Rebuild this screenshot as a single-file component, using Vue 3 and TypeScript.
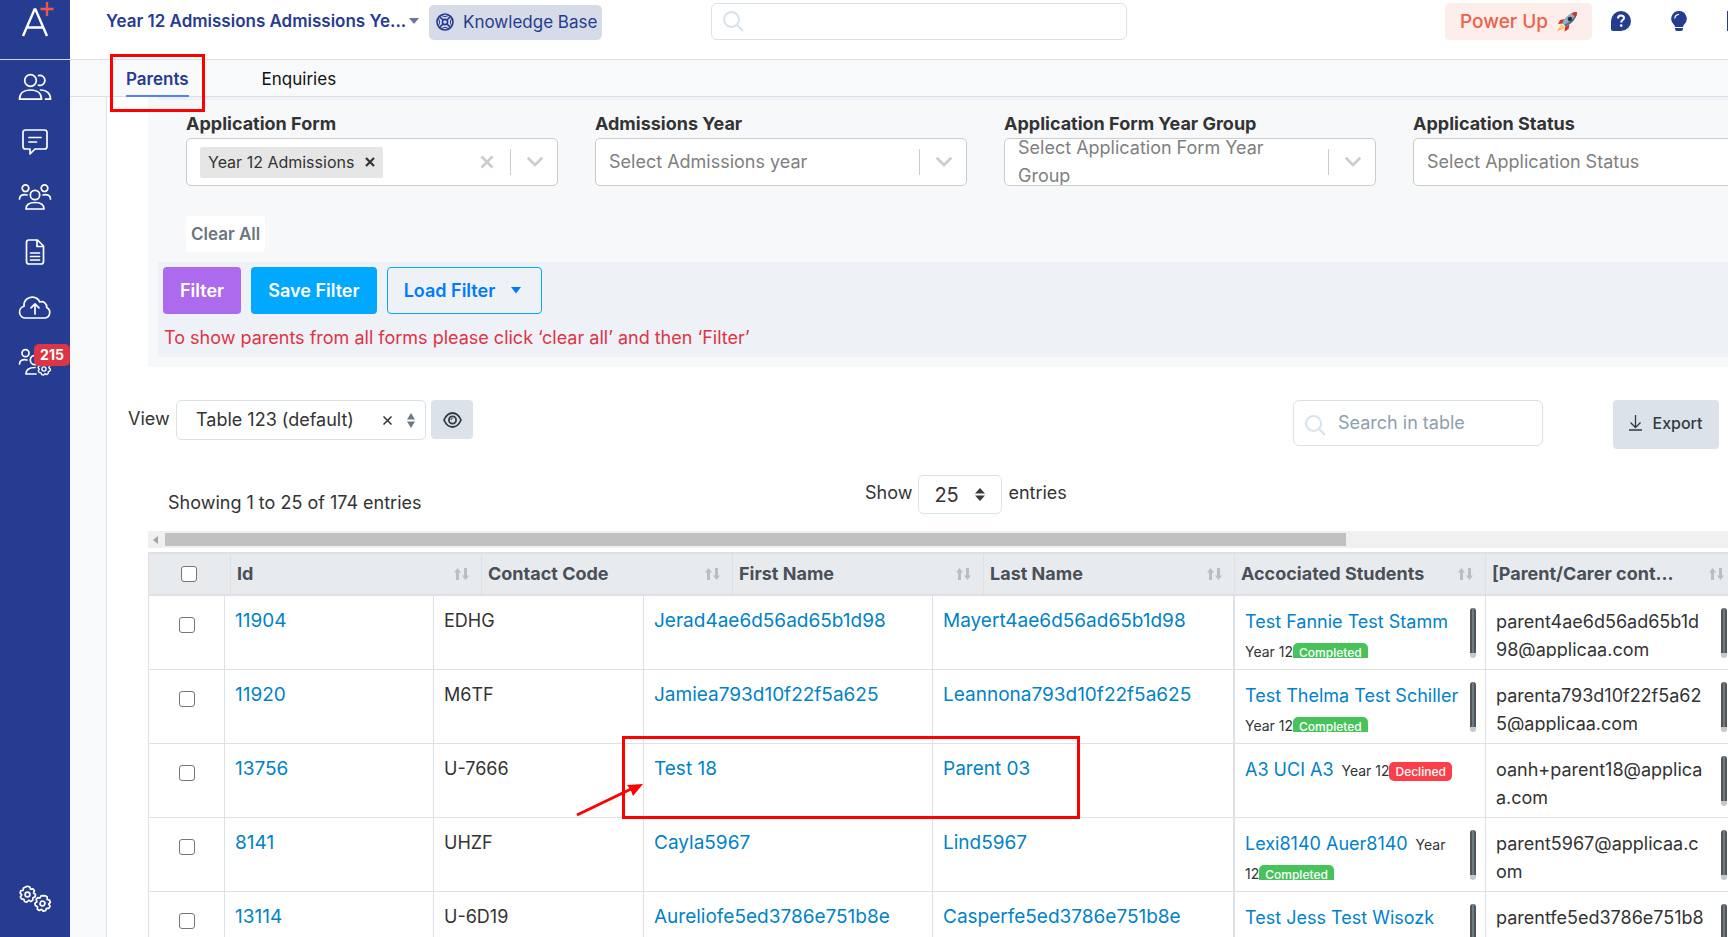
<script setup lang="ts">
import { ref } from 'vue'

interface Row {
  id: string
  code: string
  first: string
  last: string
  student: string
  year: string
  status: 'Completed' | 'Declined'
  scroll: boolean
  email: string
}

const filters = [
  { id: 'adm-year', label: 'Admissions Year', placeholder: 'Select Admissions year', wrap: false },
  { id: 'form-group', label: 'Application Form Year Group', placeholder: 'Select Application Form Year Group', wrap: true },
  { id: 'app-status', label: 'Application Status', placeholder: 'Select Application Status', wrap: false },
]

const headings = ['Id', 'Contact Code', 'First Name', 'Last Name', 'Accociated Students', '[Parent/Carer cont...']

const rows: Row[] = [
  { id: '11904', code: 'EDHG', first: 'Jerad4ae6d56ad65b1d98', last: 'Mayert4ae6d56ad65b1d98', student: 'Test Fannie Test Stamm', year: '\nYear 12', status: 'Completed', scroll: true, email: 'parent4ae6d56ad65b1d\n98@applicaa.com' },
  { id: '11920', code: 'M6TF', first: 'Jamiea793d10f22f5a625', last: 'Leannona793d10f22f5a625', student: 'Test Thelma Test Schiller', year: '\nYear 12', status: 'Completed', scroll: true, email: 'parenta793d10f22f5a62\n5@applicaa.com' },
  { id: '13756', code: 'U-7666', first: 'Test 18', last: 'Parent 03', student: 'A3 UCI A3', year: '  Year 12', status: 'Declined', scroll: false, email: 'oanh+parent18@applica\na.com' },
  { id: '8141', code: 'UHZF', first: 'Cayla5967', last: 'Lind5967', student: 'Lexi8140 Auer8140', year: '  Year\n12', status: 'Completed', scroll: true, email: 'parent5967@applicaa.c\nom' },
  { id: '13114', code: 'U-6D19', first: 'Aureliofe5ed3786e751b8e', last: 'Casperfe5ed3786e751b8e', student: 'Test Jess Test Wisozk', year: '\nYear 12', status: 'Completed', scroll: true, email: 'parentfe5ed3786e751b8\ne@applicaa.com' },
]

const gear = 'M0-8.2 2.2-7.7 3-5.4 5.4-5.6 7-3.8 6-1.6 8 0 7.6 2.4 5.4 3.2 5.3 5.6 3.3 7 1.2 5.8-.8 7.7-3 7-3.6 4.8-6 4.4-7.2 2.4-5.8.4-7.4-1.6-6.6-3.8-4.4-4.2-4-6.6-2-7.6Z'

const globalSearch = ref('')
const tableSearch = ref('')
</script>

<template>
  <div class="app">
    <nav class="sidebar" aria-label="Main">
      <a class="logo" href="#" aria-label="Home">
        <svg width="44" height="44" viewBox="0 0 44 44" fill="none">
          <path d="M10 36 21.500 9.500h1L34 36M13.500 27.500h17" stroke="#fff" stroke-width="2.400" />
          <path d="M34 2v14M27.500 9h13" stroke="#e8584c" stroke-width="2.400" />
        </svg>
      </a>
      <a class="nav-item" href="#" aria-label="Parents">
        <svg width="34" height="28" viewBox="0 0 34 28" class="line">
          <circle cx="12.500" cy="7.500" r="5.800" />
          <path d="M1.500 26.200c0-5.600 4.200-9.200 11-9.200s11 3.600 11 9.200Z" />
          <path d="M20.500 2.600a5 5 0 1 1 0 9.600M22.500 17c6-.2 10 3.200 10 9.200h-5" />
        </svg>
      </a>
      <a class="nav-item" href="#" aria-label="Messages">
        <svg width="34" height="28" viewBox="0 0 34 28" class="line">
          <path d="M7.500 2h19q2.500 0 2.500 2.500v14q0 2.500-2.500 2.500H17l-5 5v-5H7.500Q5 21 5 18.500v-14Q5 2 7.500 2Z" />
          <path d="M11 9.500h12M11 14h7.500" />
        </svg>
      </a>
      <a class="nav-item" href="#" aria-label="Groups">
        <svg width="34" height="28" viewBox="0 0 34 28" class="line">
          <circle cx="17" cy="12" r="4.700" /><circle cx="7.500" cy="5.200" r="3.300" /><circle cx="26.500" cy="5.200" r="3.300" />
          <path d="M8 26c0-4 3.400-6.500 9-6.500s9 2.500 9 6.500ZM1.500 16c0-3.400 3-5 7.500-4M32.500 16c0-3.400-3-5-7.500-4" />
        </svg>
      </a>
      <a class="nav-item" href="#" aria-label="Documents">
        <svg width="34" height="28" viewBox="0 0 34 28" class="line">
          <path d="M11 2h8.500l6 6v15.500q0 2.500-2.500 2.500H11q-2.500 0-2.500-2.500v-19Q8.500 2 11 2ZM19 2v6.500h6.500M12.500 15h9M12.500 18.500h9M12.500 22h9" />
        </svg>
      </a>
      <a class="nav-item" href="#" aria-label="Uploads">
        <svg width="34" height="28" viewBox="0 0 34 28" class="line">
          <path d="M7.500 25a6 6 0 0 1-1.500-11.800C5.500 7.500 10 4 14.500 4.200c3.500.2 6 2 7.200 4.800 4-1.200 7.300 1.500 7 5.500A5.600 5.600 0 0 1 27 25Z" />
          <path d="M17 21V11M13 14.800l4-4 4 4" />
        </svg>
      </a>
      <a class="nav-item" href="#" aria-label="Group settings">
        <svg width="34" height="28" viewBox="0 0 34 28" class="line">
          <circle cx="7.500" cy="5.200" r="3.500" /><circle cx="17" cy="12" r="4.700" />
          <path d="M1.500 16c0-3.400 3-5 7.500-4M18 26H8c0-4 3.400-6.500 9-6.500" />
          <g transform="translate(26 21) scale(.8)"><path :d="gear" fill="#263c90" /><circle r="2.600" /></g>
        </svg>
        <span class="count">215</span>
      </a>
      <a class="nav-item settings" href="#" aria-label="Settings">
        <svg width="34" height="28" viewBox="0 0 34 28" class="line">
          <g transform="translate(9.500 9.500)"><path :d="gear" /><circle r="2.400" /></g>
          <g transform="translate(24.500 18.500) rotate(20)"><path :d="gear" /><circle r="2.400" /></g>
        </svg>
      </a>
    </nav>

    <div class="main">
      <header class="topbar">
        <button class="title" type="button"><span>Year 12 Admissions Admissions Ye...</span>
          <svg width="10" height="6" viewBox="0 0 10 6"><path d="M0 0h10L5 6Z" fill="#6b749c" /></svg>
        </button>
        <a class="kb" href="#">
          <svg width="18" height="18" viewBox="0 0 18 18" fill="none" stroke="#263c90" stroke-width="1.600">
            <circle cx="9" cy="9" r="8" /><circle cx="9" cy="9" r="2.600" />
            <path d="m3.300 3.300 3.800 3.800M14.700 3.300l-3.800 3.800M3.300 14.700l3.800-3.800M14.700 14.700l-3.800-3.800" />
            <path d="M5 2.500q4 2.200 8 0M5 15.500q4-2.200 8 0M2.500 5q2.200 4 0 8M15.500 5q-2.200 4 0 8" stroke-width="1" />
          </svg>
          Knowledge Base
        </a>
        <label class="global-search">
          <svg width="21" height="21" viewBox="0 0 21 21" fill="none" stroke="#d9e2ea" stroke-width="2"><circle cx="8.500" cy="8.500" r="7.500" /><path d="m14 14 6 6" /></svg>
          <input v-model="globalSearch" type="search" aria-label="Search">
        </label>
        <button class="power" type="button">Power Up
          <svg width="22" height="22" viewBox="0 0 22 22">
            <path d="M5.500 13.500 1 20.500l7.500-4Z" fill="#f9a825" /><path d="M5.500 14.500 3 18.500l4.500-2.500Z" fill="#ffe36e" />
            <path d="m8.500 8-4.300 1L2 13l5-.5ZM13.500 13.500l-1 4.500-4 2.800.7-5.300Z" fill="#d6322c" />
            <path d="M21 1c-6 .2-11.500 4-14.800 11l3.500 3.500C17 12 20.500 7 21 1Z" fill="#8fb0c4" />
            <path d="M21 1c-2 5-6.500 10-13 12.800l1.700 1.700C17 12 20.500 7 21 1Z" fill="#4f7690" />
            <path d="M21 1c-2 0-4 .5-5.600 1.300l4.200 4.200C20.500 4.500 21 2.800 21 1Z" fill="#d6322c" />
            <circle cx="14" cy="8" r="2.300" fill="#26343f" />
          </svg>
        </button>
        <button class="icon" type="button" aria-label="Help">
          <svg width="20" height="20" viewBox="0 0 20 20"><path d="M10 0a10 10 0 0 1 0 20H2q-2 0-2-2v-8A10 10 0 0 1 10 0Z" fill="#263c90" /><path d="M7 7.500C7 5.500 8.300 4.600 10 4.600s3 .9 3 2.500c0 2-2.800 2-2.800 4.400" fill="none" stroke="#fff" stroke-width="2" /><circle cx="10.200" cy="14.600" r="1.300" fill="#fff" /></svg>
        </button>
        <button class="icon" type="button" aria-label="Tips">
          <svg width="16" height="20" viewBox="0 0 16 20"><path d="M8 0a7.700 7.700 0 0 1 5.200 13.400Q12 14.500 12 16H4q0-1.500-1.200-2.600A7.700 7.700 0 0 1 8 0ZM4 17h8v1q0 2-2 2H6q-2 0-2-2Z" fill="#263c90" /><path d="M3.800 7.500C4 5 5.500 3.500 8 3.300" fill="none" stroke="#fff" stroke-width="1.200" /></svg>
        </button>
        <span class="edge"></span>
      </header>

      <nav class="tabs" aria-label="Sections">
        <a class="tab active" href="#">Parents</a>
        <a class="tab" href="#">Enquiries</a>
      </nav>

      <div class="page">
        <section class="filters">
          <div class="fields">
            <div class="field">
              <label for="app-form">Application Form</label>
              <div class="combo">
                <span class="tag">Year 12 Admissions
                  <button type="button" aria-label="Remove Year 12 Admissions"><svg width="10" height="10" viewBox="0 0 10 10"><path d="m1 1 8 8M9 1 1 9" stroke="#333" stroke-width="2.200" /></svg></button>
                </span>
                <input id="app-form" type="text">
                <button class="clear" type="button" aria-label="Clear"><svg width="14" height="14" viewBox="0 0 14 14"><path d="m1.500 1.500 11 11M12.500 1.500l-11 11" stroke="#ccc" stroke-width="2.600" /></svg></button>
                <span class="sep"></span>
                <svg class="chev" width="16" height="10" viewBox="0 0 16 10"><path d="m1.500 1.500 6.500 6.500 6.500-6.500" /></svg>
              </div>
            </div>
            <div v-for="f in filters" :key="f.id" class="field">
              <label :for="f.id">{{ f.label }}</label>
              <div class="combo">
                <span v-if="f.wrap" class="placeholder">{{ f.placeholder }}</span>
                <select :id="f.id" :class="{ cover: f.wrap }"><option>{{ f.placeholder }}</option></select>
                <span class="sep"></span>
                <svg class="chev" width="16" height="10" viewBox="0 0 16 10"><path d="m1.500 1.500 6.500 6.500 6.500-6.500" /></svg>
              </div>
            </div>
          </div>
          <button class="clear-all" type="button">Clear All</button>
          <div class="band">
            <div class="actions">
              <button class="btn purple" type="button">Filter</button>
              <button class="btn blue" type="button">Save Filter</button>
              <button class="btn outline" type="button">Load Filter
                <svg width="10" height="7" viewBox="0 0 10 7"><path d="M0 0h10L5 6.500Z" fill="#007bff" /></svg>
              </button>
            </div>
            <p>To show parents from all forms please click ‘clear all’ and then ‘Filter’</p>
          </div>
        </section>

        <div class="view-row">
          <label for="view">View</label>
          <div class="view-select">
            <select id="view"><option>Table 123 (default)</option></select>
            <button type="button" aria-label="Clear view"><svg width="9" height="9" viewBox="0 0 9 9"><path d="m.5.5 8 8M8.500.5l-8 8" stroke="#333" stroke-width="1.500" /></svg></button>
            <svg width="8" height="15" viewBox="0 0 8 15"><path d="M4 0 8 6.500H0ZM4 15l4-6.500H0Z" fill="#6c7a86" /></svg>
          </div>
          <button class="eye" type="button" aria-label="Show columns">
            <svg width="19" height="16" viewBox="0 0 19 16" fill="none" stroke="#343a40" stroke-width="1.800"><path d="M1 8c2-4.500 5-7 8.500-7S16 3.500 18 8c-2 4.500-5 7-8.500 7S3 12.500 1 8Z" /><circle cx="9.500" cy="8" r="3.600" /><path d="M8 8q0-1.500 1.500-1.500" stroke-width="1.200" /></svg>
          </button>
          <label class="table-search">
            <svg width="21" height="21" viewBox="0 0 21 21" fill="none" stroke="#d9e2ea" stroke-width="2"><circle cx="8.500" cy="8.500" r="7.500" /><path d="m14 14 6 6" /></svg>
            <input v-model="tableSearch" type="search" placeholder="Search in table" aria-label="Search in table">
          </label>
          <button class="export" type="button">
            <svg width="13" height="16" viewBox="0 0 13 16" fill="none" stroke="#343a40" stroke-width="1.300"><path d="M6.500 0v12M1.500 7.500l5 5 5-5M0 15h13" /></svg>
            Export
          </button>
        </div>

        <div class="info-row">
          <span class="showing">Showing 1 to 25 of 174 entries</span>
          <label class="show">Show
            <span class="len">
              <select><option>25</option></select>
              <svg width="10" height="13" viewBox="0 0 10 13"><path d="M5 0 10 5.500H0ZM5 13l5-5.500H0Z" fill="#343a40" /></svg>
            </span>
            entries
          </label>
        </div>

        <div class="table-wrap">
          <div class="hscroll">
            <svg width="5" height="8" viewBox="0 0 5 8"><path d="M5 0v8L0 4Z" fill="#a3a3a3" /></svg>
            <span class="hthumb"></span>
          </div>
          <table class="head">
            <colgroup><col class="c-check"><col v-for="h in headings" :key="h" class="c-head"></colgroup>
            <thead>
              <tr>
                <th class="check"><input type="checkbox" aria-label="Select all"></th>
                <th v-for="h in headings" :key="h">
                  <div class="th">{{ h }}
                    <svg width="15" height="12" viewBox="0 0 15 12"><path d="M3.500 0 7 4.500H5V12H2V4.500H0ZM11.500 12 15 7.500h-2V0h-3v7.500H8Z" fill="#b8bec3" /></svg>
                  </div>
                </th>
              </tr>
            </thead>
          </table>
          <table class="body">
            <colgroup><col class="b0"><col class="b1"><col class="b2"><col class="b3"><col class="b4"><col class="b5"><col class="b6"></colgroup>
            <tbody>
              <tr v-for="r in rows" :key="r.id">
                <td class="check"><input type="checkbox" :aria-label="'Select ' + r.id"></td>
                <td class="link"><a href="#">{{ r.id }}</a></td>
                <td>{{ r.code }}</td>
                <td class="link"><a href="#">{{ r.first }}</a></td>
                <td class="link"><a href="#">{{ r.last }}</a></td>
                <td class="students">
                  <div class="cell">
                    <div class="clip"><a href="#">{{ r.student }}</a><span class="year">{{ r.year }}</span><span class="badge" :class="r.status.toLowerCase()">{{ r.status }}</span></div>
                    <span v-if="r.scroll" class="vscroll"></span>
                  </div>
                </td>
                <td class="email">
                  <div class="cell">
                    <div class="clip">{{ r.email }}</div>
                    <span class="vscroll"></span>
                  </div>
                </td>
              </tr>
            </tbody>
          </table>
        </div>
      </div>
    </div>

    <div class="mark tab-mark"></div>
    <div class="mark row-mark"></div>
    <svg class="arrow" width="70" height="36" viewBox="0 0 70 36"><path d="M2 33 56 7" stroke="#f00" stroke-width="3" /><path d="M68 2 52 3l3.500 4.500L58 14Z" fill="#f00" /></svg>
  </div>
</template>

<style>
html, body { overflow: hidden; }
</style>

<style scoped>
.app { position: relative; display: flex; height: 100vh; overflow: hidden; background: #fff; color: #333; font-family: Inter, "Liberation Sans", sans-serif; font-size: 18px; line-height: 28px; }
.app *, .app *::before { box-sizing: border-box; }
button, input, select { font: inherit; color: inherit; margin: 0; padding: 0; border: 0; background: none; outline: none; }
select { appearance: none; }
input[type="search"] { appearance: none; }
a { text-decoration: none; color: #0082c8; }
svg { flex: none; display: block; }

.sidebar { flex: none; width: 70px; display: flex; flex-direction: column; background: #263c90; }
.logo { height: 60px; margin-bottom: -1px; border-bottom: 1px solid #d4d9ea; padding: 0 0 0 13px; }
.nav-item { position: relative; height: 55px; display: flex; align-items: center; justify-content: center; }
.line { fill: none; stroke: #fff; stroke-width: 1.700; stroke-linecap: round; stroke-linejoin: round; }
.count { position: absolute; top: 10px; right: 0; width: 36px; height: 22px; border-radius: 5px; background: #dc3545; color: #fff; font-size: 14px; font-weight: 700; line-height: 22px; text-align: center; }
.settings { margin: auto 0 11px; }

.main { flex: 1; min-width: 0; display: flex; flex-direction: column; }
.topbar { flex: none; height: 60px; padding: 3px 0 0 36px; display: flex; align-items: flex-start; border-bottom: 1px solid #dce0e6; }
.title { flex: none; width: 313px; height: 36px; margin-right: 10px; display: flex; align-items: center; justify-content: space-between; color: #263c90; font-size: 17px; font-weight: 600; white-space: nowrap; }
.kb { flex: none; width: 173px; height: 35px; margin-top: 2px; padding: 0 0 2px 7px; display: flex; align-items: center; gap: 9px; border-radius: 5px; background: #d5dbe7; color: #263c90; font-size: 17px; white-space: nowrap; }
.global-search { width: 416px; height: 37px; margin-left: 109px; padding-left: 11px; display: flex; align-items: center; gap: 10px; border: 1px solid #d9e2e6; border-radius: 6px; }
.global-search input { flex: 1; min-width: 0; }
.power { flex: none; height: 37px; width: 147px; margin-left: auto; margin-right: 19px; padding-left: 15px; display: flex; align-items: center; gap: 8px; border-radius: 5px; background: #fdeeec; color: #ec6148; font-size: 19px; font-weight: 500; white-space: nowrap; }
.icon { margin: 8px 40px 0 0; }
.edge { width: 1px; height: 20px; margin-top: 8px; background: #263c90; }

.tabs { flex: none; height: 37px; padding-left: 56px; display: flex; gap: 73px; background: #f8f9fb; border-bottom: 1px solid #dce0e6; font-size: 17px; }
.tab { height: 37px; color: #111; line-height: 38px; }
.tab.active { color: #263c90; font-weight: 600; border-bottom: 2px solid #5481f5; }

.page { flex: 1; min-height: 0; margin-left: 36px; padding-left: 41px; border-left: 1px solid #dce3e6; box-shadow: -36px 0 #f8f9fb; overflow: hidden; }
.filters { padding: 0 0 10px 10px; background: #f7f8fa; }
.fields { padding: 10px 0 0 28px; display: grid; grid-template-columns: repeat(4, minmax(372px, 1fr)); column-gap: 37px; border-top: 3px solid #eef1f6; }
.field > label { display: block; font-weight: 700; line-height: 28px; }
.combo { position: relative; height: 48px; padding: 0 14px 0 13px; display: flex; align-items: center; overflow: hidden; border: 1px solid #ccc; border-radius: 5px; background: #fff; color: #808080; }
.combo input { flex: 1; min-width: 0; }
.combo select { flex: 1; min-width: 0; height: 46px; }
.combo .cover { position: absolute; inset: 0; width: 100%; opacity: 0; }
.placeholder { flex: 1; padding-right: 40px; }
.tag { height: 31px; padding: 0 8px; display: flex; align-items: center; gap: 11px; border-radius: 2px; background: #e6e6e6; color: #333; font-size: 16px; white-space: nowrap; }
.clear { margin-right: 16px; }
.sep { width: 1px; height: 26px; margin-right: 16px; background: #ccc; }
.chev { fill: none; stroke: #ccc; stroke-width: 2.600; stroke-linecap: round; }
.clear-all { height: 36px; margin: 30px 0 10px 28px; padding: 0 5px; border-radius: 4px; background: #fff; color: #6c757d; font-size: 17px; font-weight: 600; }
.band { padding: 5px 5px 0; height: 95px; background: #eef1f6; }
.actions { display: flex; gap: 10px; }
.btn { height: 47px; padding: 0 16px; display: flex; align-items: center; border: 1px solid transparent; border-radius: 4px; color: #fff; font-weight: 600; }
.purple { background: #ac6bec; }
.blue { background: #00a8ff; }
.outline { gap: 16px; padding-right: 20px; border-color: #00a8ff; color: #007bff; }
.band p { margin: 10px 0 0 1px; color: #dc3545; white-space: nowrap; }

.view-row { margin: 33px 9px 0 -20px; height: 75px; display: flex; align-items: flex-start; }
.view-row > label:first-child { width: 48px; line-height: 38px; }
.view-select { width: 250px; height: 40px; padding: 0 10px 0 19px; display: flex; align-items: center; border: 1px solid #d9e2ea; border-radius: 5px; }
.view-select select { flex: 1; min-width: 0; height: 38px; }
.view-select button { margin: 0 15px 0 12px; }
.eye { width: 42px; height: 39px; margin-left: 5px; display: flex; align-items: center; justify-content: center; border-radius: 4px; background: #dbe2ea; }
.table-search { width: 250px; height: 46px; margin: 0 70px 0 auto; padding-left: 11px; display: flex; align-items: center; gap: 12px; border: 1px solid #d9e2ea; border-radius: 6px; }
.table-search svg { margin-top: 4px; }
.table-search input { flex: 1; min-width: 0; }
.table-search input::placeholder { color: #8da0ad; opacity: 1; }
.export { width: 106px; height: 49px; padding-bottom: 3px; display: flex; align-items: center; justify-content: center; gap: 10px; border-radius: 4px; background: #dbe2ea; color: #343a40; font-size: 16px; font-weight: 500; }

.info-row { height: 56px; padding-left: 20px; display: grid; grid-template-columns: 697px auto; align-items: start; }
.showing { padding-top: 14px; }
.show { display: flex; gap: 6px; line-height: 36px; }
.len { width: 84px; height: 39px; padding: 0 16px 0 15px; display: flex; align-items: center; border: 1px solid #d9e6ec; border-radius: 5px; }
.len select { flex: 1; min-width: 0; height: 37px; font-size: 20px; }

.hscroll { height: 17px; margin-bottom: 4px; padding-left: 5px; display: flex; align-items: center; gap: 7px; background: #f0f0f0; }
.hthumb { width: 75%; height: 13px; background: #c1c1c1; }
table { table-layout: fixed; border-collapse: separate; border-spacing: 0; }
.head { width: 1588px; }
.body { width: 1588px; }
.c-check { width: 82px; }
.c-head { width: 251px; }
.b0 { width: 76px; }
.b1 { width: 209px; }
.b2 { width: 210px; }
.b3 { width: 289px; }
.b4 { width: 301px; }
.b5 { width: 252px; }
.b6 { width: 251px; }
th { height: 44px; padding: 0 12px 0 6px; border: solid #dee0e6; border-width: 2px 0 2px 1px; background: #e8ebee; color: #495057; font-weight: 700; text-align: left; }
.th { display: flex; align-items: center; justify-content: space-between; white-space: nowrap; line-height: 40px; }
th.check { padding: 0 0 0 32px; }
td { height: 74px; padding: 11px 9px 0 10px; border: solid #dee2e6; border-width: 0 0 1px 1px; vertical-align: top; }
td.link { font-size: 19px; }
td.check { padding: 21px 0 0 30px; }
td.students { padding-top: 12px; border-left-width: 2px; }
td.email { padding-top: 12px; }
input[type="checkbox"] { appearance: none; display: block; width: 16px; height: 16px; border: 1px solid #767676; border-radius: 3px; background: #fff; }
.cell { height: 50px; display: flex; gap: 4px; }
.clip { flex: 1; min-width: 0; height: 50px; overflow: hidden; white-space: pre-wrap; }
.vscroll { width: 6px; height: 50px; border-radius: 3px; background: linear-gradient(90deg, #555 0 2px, #6a7b8b 2px 4px, #555 4px) 0 0 / 6px 45px no-repeat #c8c8c8; }
.year { font-size: 14px; }
.badge { padding: 2px 6px; border-radius: 5px; color: #fff; font-size: 12px; font-weight: 500; line-height: 15px; }
.completed { background: #48c35c; }
.declined { background: #fb3f4a; }

.mark { position: absolute; border: 3px solid #f00; pointer-events: none; }
.tab-mark { left: 110px; top: 54px; width: 95px; height: 58px; }
.row-mark { left: 622px; top: 736px; width: 458px; height: 83px; }
.arrow { position: absolute; left: 575px; top: 782px; pointer-events: none; }
</style>
